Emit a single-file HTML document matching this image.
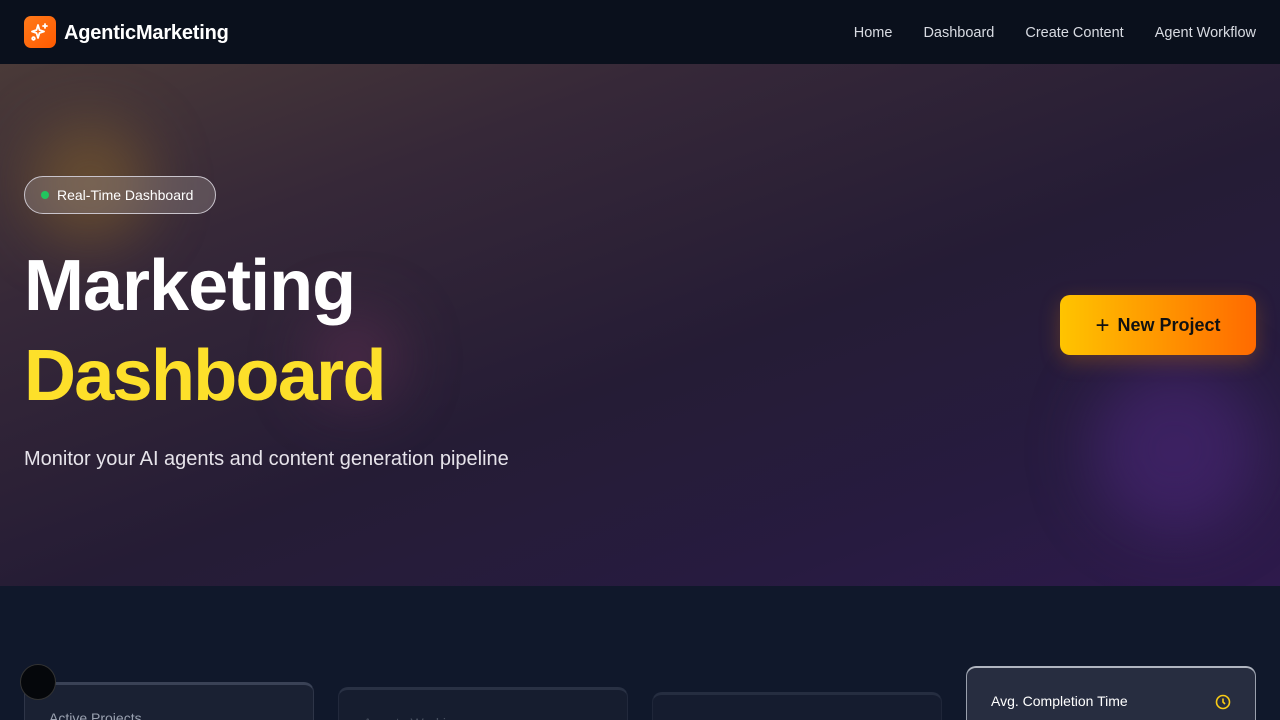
<!DOCTYPE html>
<html style="height:720px;overflow:hidden"><head><meta charset="utf-8"><style>
*{margin:0;padding:0;box-sizing:border-box}
body{width:1280px;height:720px;overflow:hidden;background:#10182b;font-family:"Liberation Sans",sans-serif;color:#fff;position:relative}
nav{position:absolute;left:0;top:0;width:1280px;height:64px;background:#0a101c;}
.logo{position:absolute;left:24px;top:16px;width:32px;height:32px;border-radius:7px;background:linear-gradient(135deg,#ff7a1a,#ff5a00)}
.brand{position:absolute;left:64px;top:22px;font-size:20px;font-weight:bold;letter-spacing:-0.2px}
.links{position:absolute;right:24px;top:25px;font-size:14.5px;color:#d8dbe2}
.links span{margin-left:31px}
.hero{position:absolute;left:0;top:64px;width:1280px;height:522px;overflow:hidden;
background:linear-gradient(160deg,#4a3a38 0%,#362838 25%,#251c35 55%,#271b40 80%,#2e1a4c 100%)}
.glow{position:absolute;border-radius:50%;filter:blur(30px)}
.badge{position:absolute;left:24px;top:112px;width:192px;height:38px;border:1px solid #c9c4cc;border-radius:19px;background:rgba(160,150,150,0.35);font-size:14px;line-height:36px;padding-left:32px}
.badge:before{content:"";position:absolute;left:16px;top:14px;width:8px;height:8px;border-radius:50%;background:#22c55e}
h1{position:absolute;left:24px;font-size:72px;font-weight:bold;letter-spacing:-1px;line-height:1}
.sub{position:absolute;left:24px;top:384px;font-size:20px;color:#e6e3ea}
.btn{position:absolute;left:1060px;top:231px;width:196px;height:60px;border-radius:10px;background:linear-gradient(90deg,#ffc400,#ff6a00);color:#111;font-size:18px;font-weight:bold;line-height:60px;text-align:center;box-shadow:0 6px 20px rgba(255,140,0,0.25)}
.cards{position:absolute;left:0;top:586px;width:1280px;height:134px;overflow:hidden}
.card{position:absolute;width:290px;height:120px;border-radius:10px;background:#1a2133;border:1px solid #2e3548;border-top:3px solid #3a4256}
.card .t{position:absolute;left:24px;top:25px;font-size:14px}
</style></head><body>
<nav><div class="logo"><svg width="32" height="32" viewBox="0 0 32 32" fill="none" stroke="#fff" stroke-width="1.8" stroke-linecap="round" stroke-linejoin="round"><path d="M14 9 L15.5 14 L20 15.5 L15.5 17 L14 22 L12.5 17 L8 15.5 L12.5 14 Z"/><path d="M21 8v4M19 10h4"/><circle cx="9.5" cy="22.5" r="1.3"/></svg></div><div class="brand">AgenticMarketing</div>
<div class="links"><span>Home</span><span>Dashboard</span><span>Create Content</span><span>Agent Workflow</span></div></nav>
<div class="hero">
<div class="glow" style="left:30px;top:60px;width:120px;height:120px;background:rgba(150,110,40,0.45)"></div>
<div class="glow" style="left:310px;top:250px;width:90px;height:90px;background:rgba(110,50,90,0.45)"></div>
<div class="glow" style="left:1090px;top:300px;width:170px;height:170px;background:rgba(80,40,130,0.5)"></div>
<div class="badge">Real-Time Dashboard</div>
<h1 style="top:186px">Marketing</h1>
<h1 style="top:276px;color:#fde02a;letter-spacing:-1.7px">Dashboard</h1>
<div class="sub">Monitor your AI agents and content generation pipeline</div>
<div class="btn"><span style="font-weight:normal;font-size:24px;vertical-align:-2px;margin-right:8px">+</span>New Project</div>
</div>
<div class="cards">
<div class="card" style="left:24px;top:96px"><div class="t" style="color:#9aa1b0">Active Projects</div></div>
<div class="card" style="left:338px;top:101px;opacity:.6"><div class="t" style="color:#6b7280">Agents Working</div></div>
<div class="card" style="left:652px;top:106px;opacity:.5"></div>
<div class="card" style="left:966px;top:80px;background:#272d40;border-color:#9aa0ad;border-top:2px solid #b0b5c0"><div class="t">Avg. Completion Time</div>
<svg style="position:absolute;right:24px;top:26px" width="16" height="16" viewBox="0 0 16 16" fill="none" stroke="#facc15" stroke-width="1.6"><circle cx="8" cy="8" r="6.5"/><path d="M8 4.5V8l2 2"/></svg></div>
</div>
<div style="position:absolute;left:20px;top:664px;width:36px;height:36px;border-radius:50%;background:#05070b;border:1px solid #333"></div>
</body></html>
